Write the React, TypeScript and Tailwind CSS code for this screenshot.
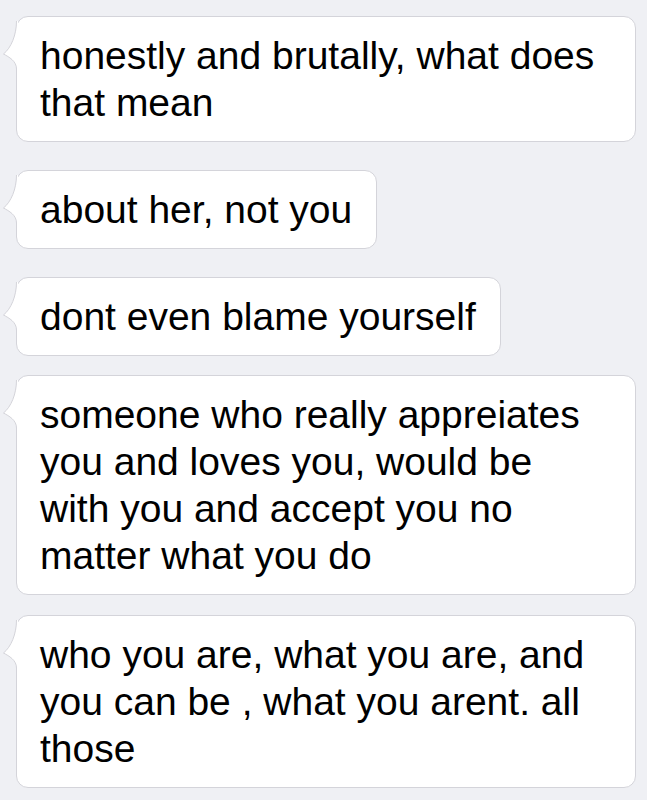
const messages = [
  { lines: ["honestly and brutally, what does", "that mean"], full: true, mt: "mt-0" },
  { lines: ["about her, not you"], full: false, mt: "mt-[28px]" },
  { lines: ["dont even blame yourself"], full: false, mt: "mt-[28px]" },
  {
    lines: [
      "someone who really appreiates",
      "you and loves you, would be",
      "with you and accept you no",
      "matter what you do",
    ],
    full: true,
    mt: "mt-[19px]",
  },
  {
    lines: ["who you are, what you are, and", "you can be , what you arent. all", "those"],
    full: true,
    mt: "mt-[20px]",
  },
];

const Tail = () => (
  <svg
    className="absolute left-[-15px] top-[4px]"
    width="16"
    height="48"
    viewBox="0 0 16 48"
  >
    <path d="M16 0 L14.5 0 C14.5 14 9 27 1.5 33 C7 36 14.5 40 14.5 48 L16 48 Z" fill="#ffffff" />
    <path
      d="M14.5 0 C14.5 14 9 27 1.5 33 C7 36 14.5 40 14.5 48"
      fill="none"
      stroke="#d4d4da"
      strokeWidth="1"
    />
  </svg>
);

const Bubble = ({ lines, full, mt }: { lines: string[]; full: boolean; mt: string }) => (
  <div
    className={`relative ${mt} ${full ? "w-[620px]" : "w-fit"} rounded-[12px] border border-[#d4d4da] bg-white py-[15px] pl-[23px] pr-[24px]`}
  >
    <Tail />
    <p className="text-[39px] leading-[47px] text-black whitespace-nowrap">
      {lines.map((l, i) => (
        <span key={i}>
          {l}
          {i < lines.length - 1 && <br />}
        </span>
      ))}
    </p>
  </div>
);

export default function App() {
  return (
    <div
      className="h-[800px] w-[647px] overflow-hidden bg-[#eff0f4] pl-[16px] pt-[16px]"
      style={{ fontFamily: '"Liberation Sans", Arial, sans-serif' }}
    >
      <div className="flex flex-col">
        {messages.map((m, i) => (
          <Bubble key={i} lines={m.lines} full={m.full} mt={m.mt} />
        ))}
      </div>
    </div>
  );
}
